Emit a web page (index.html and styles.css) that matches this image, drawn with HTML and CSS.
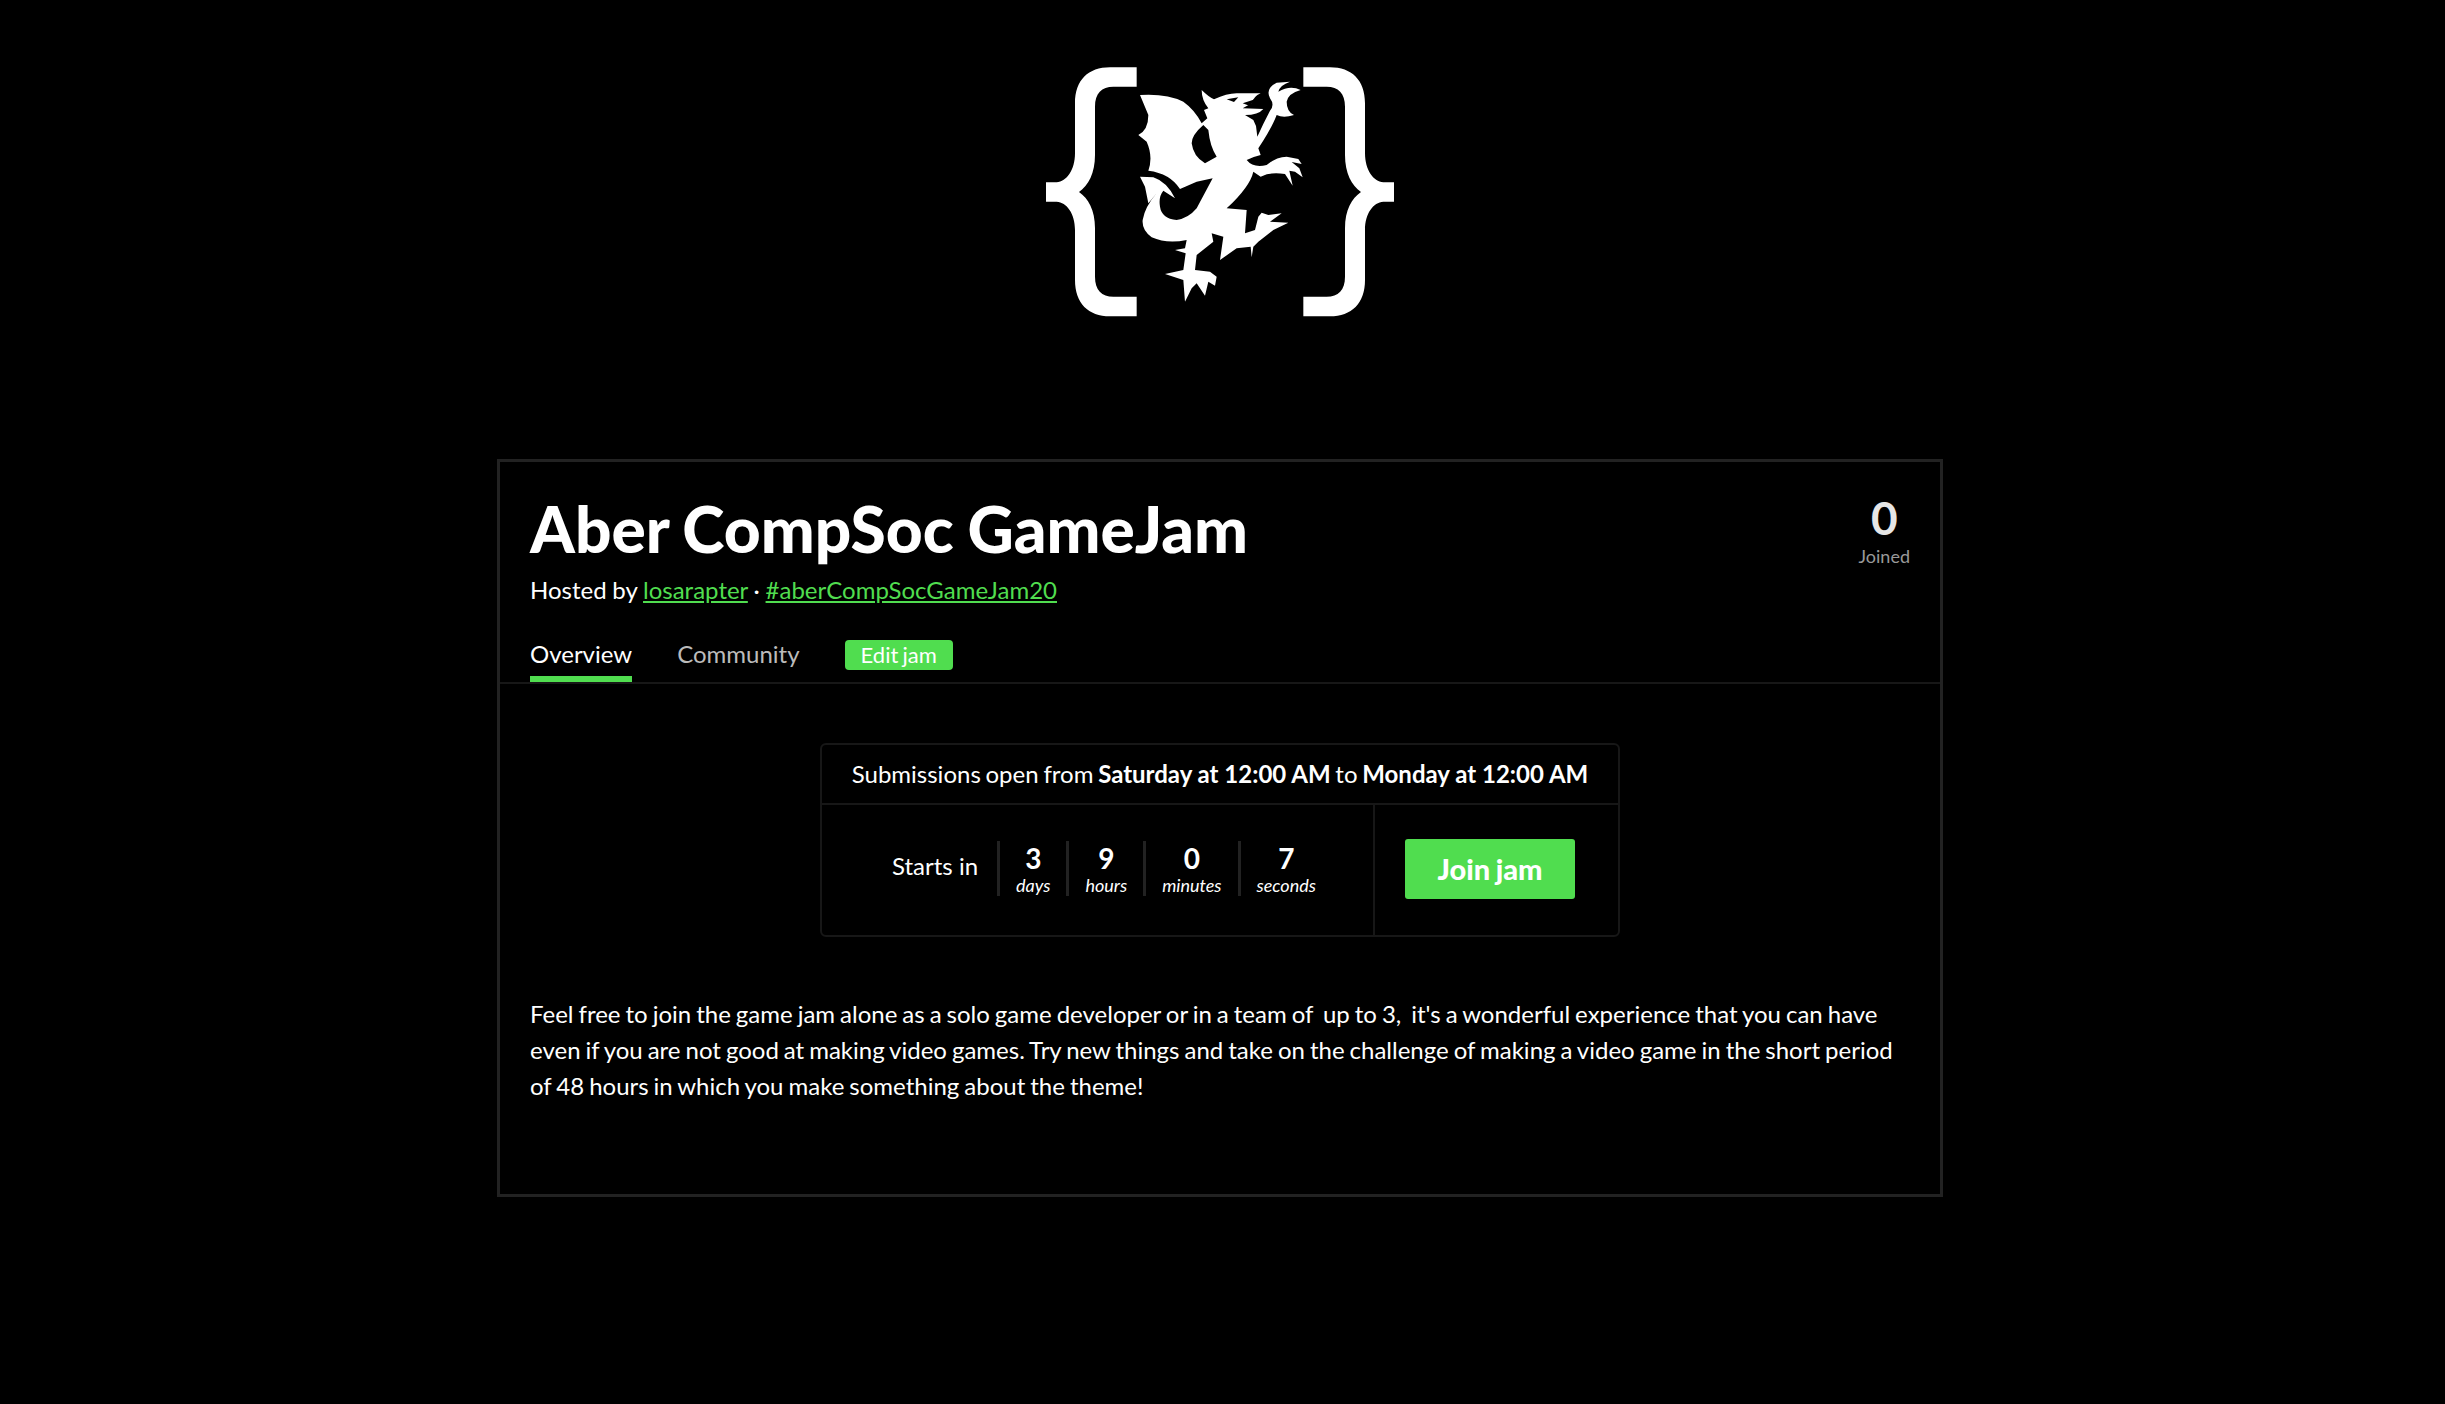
FILE: index.html
```html
<!doctype html>
<html lang="en">
    <head>
        <title>Aber CompSoc GameJam</title>
        <meta charset="utf-8">
        <link rel="stylesheet" href="styles.css">
    </head>
    <body>
        <div class="page">
            <!-- logo -->
            <div class="logo">
                <svg width="400" height="300" viewBox="0 0 1200 900">
                    <g fill="#fff">
                        <path d="M350 82H270C205 82 165 120 165 190V340C165 390 140 425 110 427H78V485H110C140 487 165 520 165 570V720C165 790 205 829 270 829H350V770H280C245 770 225 750 225 710V565C225 510 205 475 177 456C205 437 225 400 225 345V200C225 160 245 140 280 140H350Z"/>
                        <path d="M350 82H270C205 82 165 120 165 190V340C165 390 140 425 110 427H78V485H110C140 487 165 520 165 570V720C165 790 205 829 270 829H350V770H280C245 770 225 750 225 710V565C225 510 205 475 177 456C205 437 225 400 225 345V200C225 160 245 140 280 140H350Z" transform="translate(1200 0) scale(-1 1)"/>
                        <path d="M360 165Q440 160 490 185Q525 210 545 250L562 235L552 210L565 205Q545 180 545 150Q565 170 582 178Q620 160 650 160L722 160Q700 170 695 190L668 205L730 207Q715 225 675 225L700 240L708 258L712 290Q730 250 750 212Q765 195 750 175Q735 145 770 128L810 125Q780 135 775 155Q810 135 842 150Q805 160 800 185Q800 215 822 225Q790 235 770 225Q755 265 715 325L722 345Q700 350 680 360Q700 385 740 375Q770 350 800 350L835 357L845 372L815 366L838 385L848 412L825 395L808 392L818 437L795 402Q750 395 722 410L700 395Q690 440 620 505L680 510L675 580L705 570L715 530L725 518L745 525L785 520L750 545L805 548L760 570L715 605L700 620L695 652L692 620L650 625L600 660L610 590L575 580L580 605L530 645L525 690L570 695L590 710L585 737L565 725L555 767L530 730L515 745L495 785L490 720L435 702L490 690L497 640L465 630L495 625L500 600Q440 612 395 592Q365 570 368 540Q375 500 410 460L385 490L375 440L360 410L400 412Q440 425 465 475L430 452Q415 470 420 500Q425 535 470 540Q505 535 530 505L578 415L530 425L480 447Q450 400 385 392Q400 350 380 305L355 285Q385 270 385 225Z"/>
                    </g>
                    <g fill="#000">
                        <path d="M550 255Q515 285 515 310Q520 350 555 370L590 350Q570 320 565 270Z"/>
                        <path d="M620 178L655 172L642 186Z"/>
                        <path d="M668 190L705 178L690 198Z"/>
                    </g>
                </svg>
            </div>

            <div class="card">
                <div class="jam_header">
                    <div class="stat">
                        <div class="stat_num">0</div>
                        <div class="stat_lbl">Joined</div>
                    </div>
                    <h1 class="jam_title">Aber CompSoc GameJam</h1>
                    <div class="hosted">Hosted by <a href="#">losarapter</a> · <a href="#">#aberCompSocGameJam20</a></div>
                    <div class="tabs">
                        <a class="tab active" href="#">Overview</a>
                        <a class="tab" href="#">Community</a>
                        <a class="edit_btn" href="#">Edit jam</a>
                    </div>
                </div>

                <div class="jam_body">
                    <div class="date_box">
                        <div class="date_row">Submissions open from <strong>Saturday at 12:00 AM</strong> to <strong>Monday at 12:00 AM</strong></div>
                        <div class="count_row">
                            <div class="countdown">
                                <div class="starts">Starts in</div>
                                <div class="unit"><b>3</b><i>days</i></div>
                                <div class="unit"><b>9</b><i>hours</i></div>
                                <div class="unit"><b>0</b><i>minutes</i></div>
                                <div class="unit"><b>7</b><i>seconds</i></div>
                            </div>
                            <div class="join_cell"><a class="join_btn" href="#">Join jam</a></div>
                        </div>
                    </div>
                    <p class="desc">Feel free to join the game jam alone as a solo game developer or in a team of&nbsp; up to 3,&nbsp; it's a wonderful experience that you can have even if you are not good at making video games. Try new things and take on the challenge of making a video game in the short period of 48 hours in which you make something about the theme!</p>
                </div>
            </div>
        </div>
    </body>
</html>
```
FILE: styles.css
```css
html, body {
    margin: 0;
    background: #000;
}

body {
    color: #fff;
    font-family: Lato, "Open Sans", sans-serif;
    font-size: 24px;
    word-spacing: -1.4px;
    overflow: hidden;
}

a {
    color: #50dd4f;
}

.page {
    width: 1446px;
    margin-left: 497px;
}

.logo {
    display: flex;
    justify-content: center;
    padding-top: 40px;
    height: 459px;
    box-sizing: border-box;
}

.logo svg {
    display: block;
    filter: blur(0.5px);
}

.card {
    border: 3px solid #222;
    height: 738px;
    box-sizing: border-box;
}

.jam_header {
    position: relative;
    border-bottom: 2px solid #171717;
    padding: 30px 30px 0;
    height: 222px;
    box-sizing: border-box;
}

.stat {
    position: absolute;
    top: 30px;
    right: 30px;
    text-align: center;
}

.stat_num {
    font-size: 46px;
    font-weight: 700;
    line-height: 52px;
    color: #e6e6e6;
}

.stat_lbl {
    font-size: 18px;
    line-height: 24px;
    color: #999;
}

.jam_title {
    margin: 0;
    font-size: 64px;
    font-weight: 900;
    line-height: 74px;
}

.hosted {
    line-height: 34px;
    margin-top: 7px;
    word-spacing: -0.4px;
}

.tabs {
    display: flex;
    align-items: flex-start;
    gap: 45px;
    margin-top: 29px;
}

.tab {
    color: #bbb;
    text-decoration: none;
    line-height: 36px;
    height: 46px;
    box-sizing: border-box;
}

.tab.active {
    color: #fff;
    border-bottom: 6px solid #50dd4f;
}

.edit_btn {
    background: #50dd4f;
    color: #fff;
    text-decoration: none;
    font-size: 22px;
    line-height: 30px;
    height: 30px;
    padding: 0 16px;
    border-radius: 4px;
    margin-top: 4px;
}

.jam_body {
    padding: 59px 30px 0;
}

.date_box {
    width: 800px;
    box-sizing: border-box;
    margin: 0 auto;
    border: 2px solid #171717;
    border-radius: 6px;
}

.date_row {
    text-align: center;
    line-height: 58px;
    border-bottom: 2px solid #171717;
}

.date_row strong {
    word-spacing: 0;
}

.count_row {
    display: flex;
    height: 130px;
}

.countdown {
    flex: 1;
    display: flex;
    align-items: center;
    padding: 0 0 3px 70px;
    border-right: 2px solid #171717;
}

.starts {
    padding: 0 19px 6px 0;
    word-spacing: 0;
}

.unit {
    display: flex;
    flex-direction: column;
    align-items: center;
    border-left: 3px solid #222;
    padding: 0 16px;
    height: 55px;
}

.unit b {
    font-size: 28px;
    line-height: 34px;
}

.unit i {
    font-size: 18px;
    line-height: 21px;
}

.join_cell {
    width: 243px;
    display: flex;
    align-items: center;
    padding: 0 0 3px 30px;
    box-sizing: border-box;
}

.join_btn {
    display: block;
    background: #50dd4f;
    color: #fff;
    font-size: 29px;
    font-weight: 900;
    line-height: 60px;
    text-align: center;
    text-decoration: none;
    width: 170px;
    border-radius: 3px;
    white-space: nowrap;
}

.desc {
    margin: 59px 0 0;
    line-height: 36px;
    word-spacing: -1.15px;
}
```
